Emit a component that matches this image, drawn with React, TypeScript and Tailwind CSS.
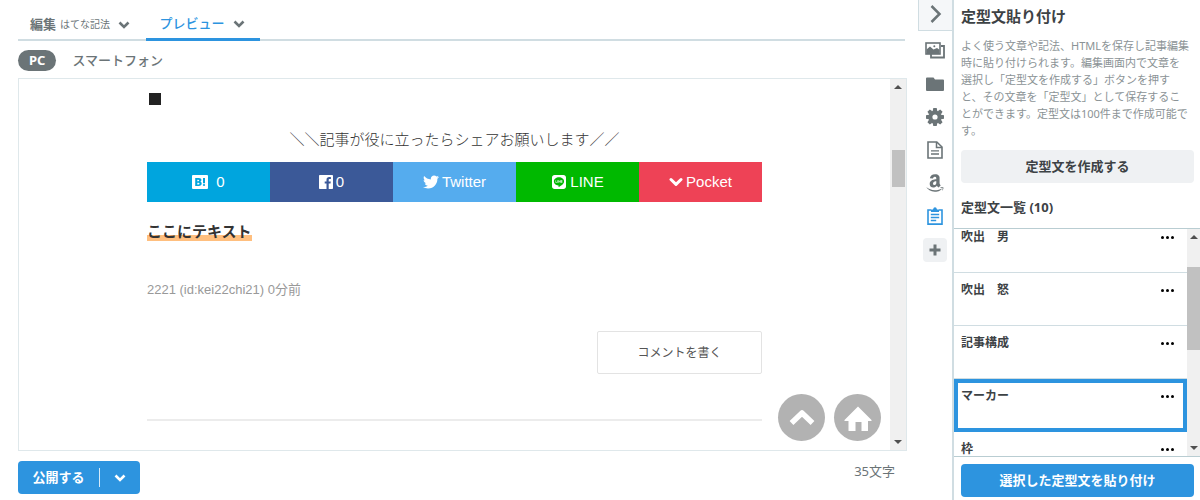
import type { ReactNode } from "react";
import { FaAmazon, FaLine, FaTwitter } from "react-icons/fa";

function Chevron({ className }: { className: string }) {
  return (
    <svg viewBox="0 0 12 8" className={className} fill="none" stroke="currentColor" aria-hidden="true">
      <path d="M1.5 1.5 6 6l4.5-4.5" strokeWidth="2.6" />
    </svg>
  );
}

function HatenaIcon() {
  return (
    <svg viewBox="0 0 16 14" className="h-3.5 w-4" aria-hidden="true">
      <rect width="16" height="14" rx="1" fill="#fff" />
      <path
        fill="#00a5de"
        fillRule="evenodd"
        d="M3.2 3h3.6c1.7 0 2.6.7 2.6 1.9 0 .9-.5 1.5-1.4 1.7 1.1.2 1.7.9 1.7 2 0 1.500-1.100 2.400-2.900 2.400H3.200zM5.300 4.700v1.500h.9c.7 0 1-.3 1-.8s-.3-.7-1-.7zM5.300 7.700v1.700h1.100c.7 0 1.100-.3 1.100-.9 0-.5-.4-.8-1.100-.8zM11 3h2v5.200h-2z"
      />
      <circle cx="12" cy="10" r="1.100" fill="#00a5de" />
    </svg>
  );
}

function FacebookIcon() {
  return (
    <svg viewBox="0 0 14 14" className="size-3.5" fill="#fff" aria-hidden="true">
      <path d="M.8 0h12.400q.8 0 .8.8v12.400q0 .8-.8.8H9.700V8.600h1.800l.3-2.100H9.700V5.100c0-.6.200-1 1-1h1.200V2.200C11.700 2.200 11 2.100 10.200 2.100 8.600 2.100 7.500 3.100 7.500 4.900v1.600H5.700v2.100h1.800V14H.8q-.8 0-.8-.8V.8Q0 0 .8 0z" />
    </svg>
  );
}

function PocketIcon() {
  return (
    <svg viewBox="0 0 14 10" className="h-2.5 w-3.5" fill="none" stroke="#fff" strokeWidth="3" strokeLinecap="round" strokeLinejoin="round" aria-hidden="true">
      <path d="M2 2.500 7 7.300l5-4.800" />
    </svg>
  );
}

function ImagesIcon() {
  return (
    <svg viewBox="0 0 20 17" className="h-[17px] w-5" fill="none" stroke="currentColor" aria-hidden="true">
      <path d="M16 4h3v11.500H6V12" strokeWidth="1.800" />
      <rect x="1" y="1" width="14" height="11" strokeWidth="1.600" />
      <path d="M1.500 7.500 5 4.500l3.500 3L12 6l2.500 1.700V12h-13z" fill="currentColor" stroke="none" />
      <circle cx="9.300" cy="4.300" r="1" fill="currentColor" stroke="none" />
    </svg>
  );
}

function FolderIcon() {
  return (
    <svg viewBox="0 0 18 14" className="h-3.5 w-[18px]" fill="currentColor" aria-hidden="true">
      <path d="M0 1.500Q0 .5 1 .5h6.500l1.500 2h8q1 0 1 1V13q0 1-1 1H1q-1 0-1-1z" />
    </svg>
  );
}

function GearIcon() {
  return (
    <svg viewBox="-9 -9 18 18" className="h-[18px] w-[18px]" fill="currentColor" aria-hidden="true">
      <circle r="4.600" fill="none" stroke="currentColor" strokeWidth="4" />
      {[0, 45, 90, 135].map((a) => (
        <g key={a} transform={`rotate(${a})`}>
          <path d="M-2.300-6-1.700-9h3.400l.6 3zM-2.300 6l.6 3h3.400l.6-3z" />
        </g>
      ))}
    </svg>
  );
}

function DocumentIcon() {
  return (
    <svg viewBox="0 0 16 18" className="h-[18px] w-4" fill="none" stroke="currentColor" aria-hidden="true">
      <path d="M1 1h8.800L15 6v11H1z" strokeWidth="1.600" />
      <path d="M9.500 1v5.500H15" strokeWidth="1.500" />
      <path d="M4 9.800h8M4 13h8" strokeWidth="1.300" />
    </svg>
  );
}

function ClipboardIcon() {
  return (
    <svg viewBox="0 0 16 18" className="h-[18px] w-4" fill="none" stroke="currentColor" aria-hidden="true">
      <path d="M4 3H1v14.100h14V3h-3" strokeWidth="1.600" />
      <path d="M4 5V2.500h2Q6.500.3 8 .3t2 2.200h2V5z" fill="currentColor" stroke="none" />
      <path d="M3.800 7.500h8.400M3.800 10.500h8.400M3.800 13.500h5.400" strokeWidth="1.300" />
    </svg>
  );
}

function PlusIcon() {
  return (
    <svg viewBox="0 0 12 12" className="h-3 w-3" fill="none" stroke="currentColor" aria-hidden="true">
      <path d="M6 .5v11M.5 6h11" strokeWidth="3" />
    </svg>
  );
}

function ScrollArrow({ down = false }: { down?: boolean }) {
  return (
    <svg viewBox="0 0 8 4" className="h-1 w-2 shrink-0 fill-[#505050]" aria-hidden="true">
      <path d={down ? "M0 0h8L4 4z" : "M0 4h8L4 0z"} />
    </svg>
  );
}

const shares: { name: string; label: string; tint: string; icon: ReactNode }[] = [
  { name: "はてなブックマーク", label: "0", tint: "bg-[#00a5de] gap-2", icon: <HatenaIcon /> },
  { name: "Facebook", label: "0", tint: "bg-[#3b5998] gap-[3px]", icon: <FacebookIcon /> },
  { name: "Twitter", label: "Twitter", tint: "bg-[#55acee] gap-[3px]", icon: <FaTwitter className="size-4" /> },
  { name: "LINE", label: "LINE", tint: "bg-[#00b900] gap-[3px]", icon: <FaLine className="size-4" /> },
  { name: "Pocket", label: "Pocket", tint: "bg-[#ee4256] gap-[3px]", icon: <PocketIcon /> },
];

const tools: { name: string; icon: ReactNode; color: string }[] = [
  { name: "写真", icon: <ImagesIcon />, color: "text-[#6b7477]" },
  { name: "カテゴリー", icon: <FolderIcon />, color: "text-[#6b7477]" },
  { name: "設定", icon: <GearIcon />, color: "text-[#6b7477]" },
  { name: "下書き", icon: <DocumentIcon />, color: "text-[#6b7477]" },
  { name: "Amazon", icon: <FaAmazon className="size-5" />, color: "text-[#6b7477]" },
  { name: "定型文", icon: <ClipboardIcon />, color: "text-[#2d94df]" },
];

const snippets = ["吹出　男", "吹出　怒", "記事構成", "マーカー", "枠"];

function Editor() {
  return (
    <main className="flex min-w-0 flex-1 flex-col pr-[11px] pl-[18px]">
      <div className="mr-0.5 flex h-[41px] shrink-0 items-stretch border-b-2 border-[#d0dde2]">
        <button className="flex items-center gap-1 pt-2.5 pl-3 text-[13px] font-bold text-[#6b7477]">
          編集 <span className="text-[10px] font-normal">はてな記法</span>
          <Chevron className="ml-1 h-2 w-3" />
        </button>
        <button className="-mb-0.5 ml-4 flex w-[114px] items-center justify-center gap-2 border-b-[3px] border-[#2d94df] pt-2.5 pr-0.5 text-[13px] font-medium text-[#2d94df]">
          プレビュー
          <Chevron className="h-2 w-3 text-[#6b7477]" />
        </button>
      </div>
      <div className="flex h-[37px] shrink-0 items-center gap-4 pt-0.5 text-[13px] font-medium text-[#6b7477]">
        <button className="h-[21px] rounded-full bg-[#6b7477] px-[11px] leading-[21px] font-bold text-white">PC</button>
        <button>スマートフォン</button>
      </div>

      <section className="relative flex min-h-0 flex-1 border border-[#dfe8eb]">
        <div className="min-w-0 flex-1 overflow-hidden">
          <article className="mx-auto max-w-[615px]">
            <h2 className="h-[49px] pt-[14px] pl-0.5" aria-label="■">
              <span className="block size-3 bg-[#222]" />
            </h2>
            <p className="h-[34px] text-center text-[15px] leading-[22px] font-light text-[#333]">
              ＼＼記事が役に立ったらシェアお願いします／／
            </p>
            <div className="grid grid-cols-5 text-[15px] text-white [font-family:'Liberation_Sans','Noto_Sans_CJK_JP',sans-serif]">
              {shares.map((s) => (
                <a key={s.name} href="#share" aria-label={s.name} className={`flex h-10 items-center justify-center ${s.tint}`}>
                  {s.icon}
                  {s.label}
                </a>
              ))}
            </div>
            <p className="mt-[19px] text-[15px] leading-[20px] font-bold text-[#333]">
              <span className="bg-linear-to-b from-transparent from-70% to-[#ffbf7f] to-70%">ここにテキスト</span>
            </p>
            <p className="mt-[39px] text-[13px] leading-[20px] text-[#999] [font-family:'Liberation_Sans','Noto_Sans_CJK_JP',sans-serif]">
              2221 (id:kei22chi21) 0分前
            </p>
            <div className="mt-[31px] flex justify-end">
              <button className="h-[43px] w-[165px] rounded-xs border border-[#e3e3e3] text-[12px] text-[#555]">
                コメントを書く
              </button>
            </div>
            <hr className="mt-[45px] border-t-2 border-[#ececec]" />
          </article>
        </div>
        <div className="flex w-4 shrink-0 flex-col items-center bg-[#f0f0f0] py-[6px]">
          <ScrollArrow />
          <span className="mt-[61px] mb-auto h-[37px] w-[13px] bg-[#c1c1c1]" />
          <ScrollArrow down />
        </div>
        <div className="absolute right-[25px] bottom-[9px] flex gap-[9px]">
          <button aria-label="トップへ戻る" className="flex size-[47px] items-center justify-center rounded-full bg-[#b2b2b2]">
            <svg viewBox="0 0 26 17" className="h-[17px] w-[26px]" fill="none" stroke="#fff" strokeWidth="5.500" strokeLinejoin="round" aria-hidden="true">
              <path d="M2.500 14 13 4l10.500 10" />
            </svg>
          </button>
          <button aria-label="ホーム" className="flex size-[47px] items-center justify-center rounded-full bg-[#b2b2b2]">
            <svg viewBox="0 0 28 26" className="mt-0.5 h-[26px] w-7" fill="#fff" aria-hidden="true">
              <path d="M14 .5 27.500 14v1H24v9.500q0 .5-.5.5h-6V16h-6v9H5q-.5 0-.5-.5V15H.5v-1z" />
            </svg>
          </button>
        </div>
      </section>

      <footer className="flex h-[49px] shrink-0 items-start justify-between pt-[10px]">
        <div className="flex h-[33px] w-[122px] items-center rounded bg-[#2d94df] text-white">
          <button className="flex-1 text-[13px] font-bold">公開する</button>
          <span className="h-[19px] w-px bg-white/80" />
          <button aria-label="公開オプション" className="flex h-full w-10 items-center justify-center">
            <Chevron className="h-2 w-3" />
          </button>
        </div>
        <p className="mr-3 text-[13px] leading-[20px] text-[#6b7477]">35文字</p>
      </footer>
    </main>
  );
}

function ToolRail() {
  return (
    <nav className="flex w-[34px] shrink-0 flex-col items-center">
      <button
        aria-label="閉じる"
        className="mb-[3px] flex h-[31px] w-full items-center justify-center border-b border-l border-[#d0dde2] bg-[#f5f7f9] pb-0.5 text-[#6b7477]"
      >
        <svg viewBox="0 0 12 20" className="h-5 w-3" fill="none" stroke="currentColor" strokeWidth="2.500" aria-hidden="true">
          <path d="m1.500 2 8 8-8 8" />
        </svg>
      </button>
      {tools.map((t) => (
        <button key={t.name} aria-label={t.name} className={`flex h-[33px] w-full items-center justify-center ${t.color}`}>
          {t.icon}
        </button>
      ))}
      <button aria-label="追加" className="mt-1.5 flex size-6 items-center justify-center rounded bg-[#eff1f3] text-[#6b7477]">
        <PlusIcon />
      </button>
    </nav>
  );
}

function SnippetPanel() {
  return (
    <aside className="flex w-[248px] shrink-0 flex-col border-l-2 border-[#d0dde2] text-[#3d4245]">
      <div className="flex shrink-0 flex-col pr-1.5 pl-[7px]">
        <h1 className="mt-1.5 text-[15px] leading-[20px] font-bold">定型文貼り付け</h1>
        <p className="mt-[11px] text-[11px] leading-[17px] whitespace-nowrap text-[#8b9396]">
          よく使う文章や記法、HTMLを保存し記事編集
          <br />
          時に貼り付けられます。編集画面内で文章を
          <br />
          選択し「定型文を作成する」ボタンを押す
          <br />
          と、その文章を「定型文」として保存するこ
          <br />
          とができます。定型文は100件まで作成可能で
          <br />
          す。
        </p>
        <button className="mt-[11px] h-[33px] rounded bg-[#eff1f3] text-[13px] font-bold">定型文を作成する</button>
        <h2 className="mt-[14px] mb-[11px] text-[13px] leading-[20px] font-bold">定型文一覧 (10)</h2>
      </div>
      <div className="flex min-h-0 flex-1 border-y border-[#b9cdd2]">
        <ul className="min-w-0 flex-1 overflow-hidden">
          {snippets.map((s) => (
            <li
              key={s}
              className={`flex h-[53px] items-start justify-between border-b border-[#d0dde2] pt-2.5 pr-[13px] pl-[7px] text-[12px] leading-[14px] font-bold first:-mt-[9px] ${
                s === "マーカー" ? "outline-4 -outline-offset-4 outline-[#2d94df]" : ""
              }`}
            >
              {s}
              <button aria-label={`${s}のメニュー`} className="flex h-3.5 items-center gap-0.5">
                <i className="size-[3px] rounded-full bg-black" />
                <i className="size-[3px] rounded-full bg-black" />
                <i className="size-[3px] rounded-full bg-black" />
              </button>
            </li>
          ))}
        </ul>
        <div className="flex w-[13px] shrink-0 flex-col items-center bg-[#f0f0f0] py-1.5">
          <ScrollArrow />
          <span className="mt-7 mb-auto h-[83px] w-full bg-[#c1c1c1]" />
          <ScrollArrow down />
        </div>
      </div>
      <div className="shrink-0 pt-[7px] pr-1.5 pb-[3px] pl-[7px]">
        <button className="h-[33px] w-full rounded bg-[#2d94df] text-[13px] font-bold text-white">
          選択した定型文を貼り付け
        </button>
      </div>
    </aside>
  );
}

export default function App() {
  return (
    <div className="flex h-screen overflow-hidden bg-white [font-family:'Noto_Sans','Noto_Sans_CJK_JP',sans-serif]">
      <Editor />
      <ToolRail />
      <SnippetPanel />
    </div>
  );
}
